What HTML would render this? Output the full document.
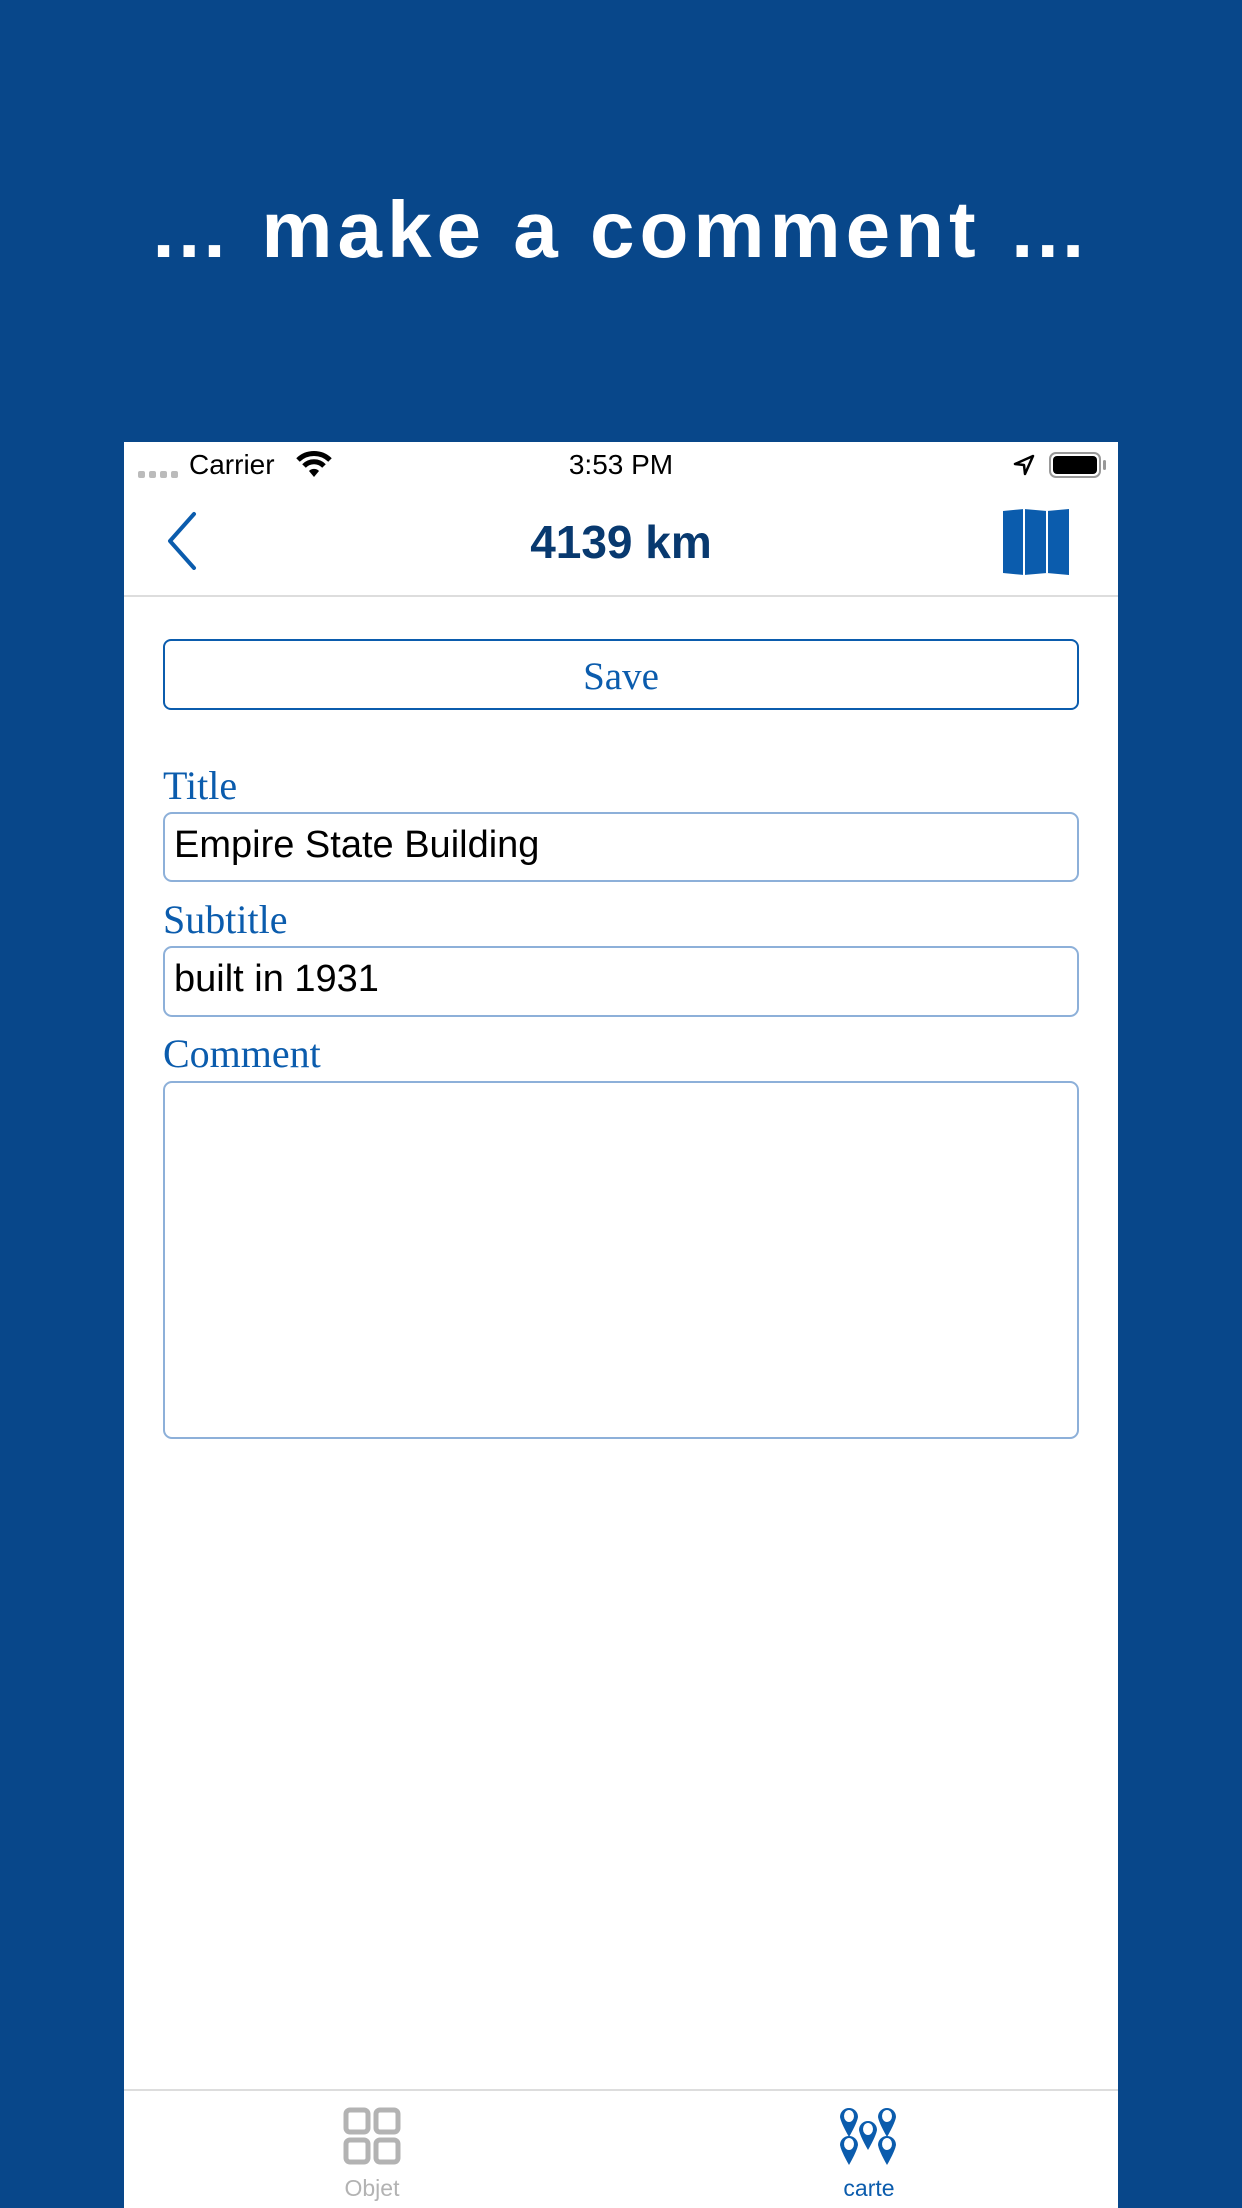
<!DOCTYPE html>
<html><head><meta charset="utf-8"><style>
*{margin:0;padding:0;box-sizing:border-box}
body{width:1242px;height:2208px;background:#08478a;position:relative;overflow:hidden;font-family:"Liberation Sans",sans-serif}
.abs{position:absolute}
.head{left:0;width:1242px;top:190px;text-align:center;color:#fff;font-weight:bold;font-size:80px;letter-spacing:5px;line-height:80px}
.phone{left:124px;top:442px;width:994px;height:1766px;background:#fff}
.lbl{position:absolute;left:39px;font-family:"Liberation Serif",serif;color:#0b5cad;font-size:40px;line-height:40px}
.inp{position:absolute;left:39px;width:916px;border:2.5px solid #8db0d9;border-radius:9px}
.txt{position:absolute;left:50px;font-size:38px;color:#000;line-height:40px}
</style></head><body>
<div class="abs head">… make a comment …</div>
<div class="abs phone">
 <svg class="abs" style="left:14px;top:27px" width="44" height="10"><g fill="#bbb"><rect x="0" y="2" width="7" height="7" rx="2"/><rect x="11" y="2" width="7" height="7" rx="2"/><rect x="22" y="2" width="7" height="7" rx="2"/><rect x="33" y="2" width="7" height="7" rx="2"/></g></svg>
 <div class="abs" style="left:65px;top:7px;font-size:28px;line-height:32px">Carrier</div>
 <svg class="abs" style="left:172px;top:8px" width="36" height="28" viewBox="0 0 36 28"><path d="M2 10 A23 23 0 0 1 34 10" stroke="#000" stroke-width="5" fill="none"/><path d="M8 16 A14 14 0 0 1 28 16" stroke="#000" stroke-width="5" fill="none"/><path d="M13 21 L18 27 L23 21 A7 7 0 0 0 13 21Z" fill="#000"/></svg>
 <div class="abs" style="left:0;width:994px;top:7px;text-align:center;font-size:28px;line-height:32px">3:53 PM</div>
 <svg class="abs" style="left:889px;top:12px" width="22" height="22" viewBox="0 0 22 22"><path d="M20 2 L2 10 L11 11 L12 20 Z" fill="none" stroke="#000" stroke-width="2.5" stroke-linejoin="round"/></svg>
 <div class="abs" style="left:925px;top:10px;width:52px;height:26px;border:2px solid #999;border-radius:7px;padding:2px"><div style="background:#000;width:100%;height:100%;border-radius:4px"></div></div>
 <div class="abs" style="left:979px;top:18px;width:3px;height:10px;background:#999;border-radius:2px"></div>
 <svg class="abs" style="left:40px;top:68px" width="36" height="60" viewBox="0 0 36 60"><path d="M30 4 L6 31 L30 58" fill="none" stroke="#0b5cad" stroke-width="4" stroke-linecap="round" stroke-linejoin="round"/></svg>
 <div class="abs" style="left:0;width:994px;top:74px;text-align:center;font-size:46px;font-weight:bold;color:#08396f;line-height:52px">4139 km</div>
 <svg class="abs" style="left:879px;top:67px" width="66" height="66" viewBox="0 0 66 66"><path d="M0 2 L21 0 L44 2 L66 0 L66 66 L44 64 L21 66 L0 64Z" fill="#0b5cad"/><path d="M21 0V66M44 2V64" stroke="#fff" stroke-width="2"/></svg>
 <div class="abs" style="left:0;top:153px;width:994px;height:2px;background:#ddd"></div>
 <div class="abs" style="left:39px;top:197px;width:916px;height:71px;border:2.5px solid #0b5cad;border-radius:8px;text-align:center;font-family:'Liberation Serif',serif;color:#0b5cad;font-size:39px;line-height:72px">Save</div>
 <div class="lbl" style="top:324px">Title</div>
 <div class="inp" style="top:370px;height:70px"></div>
 <div class="txt" style="top:383px">Empire State Building</div>
 <div class="lbl" style="top:458px">Subtitle</div>
 <div class="inp" style="top:504px;height:71px"></div>
 <div class="txt" style="top:517px">built in 1931</div>
 <div class="lbl" style="top:592px">Comment</div>
 <div class="inp" style="top:639px;height:358px"></div>
 <div class="abs" style="left:0;top:1647px;width:994px;height:2px;background:#ddd"></div>
 <svg class="abs" style="left:219px;top:1665px" width="58" height="58" viewBox="0 0 58 58"><g fill="none" stroke="#b3b3b3" stroke-width="5"><rect x="3" y="3" width="22" height="22" rx="4"/><rect x="33" y="3" width="22" height="22" rx="4"/><rect x="3" y="33" width="22" height="22" rx="4"/><rect x="33" y="33" width="22" height="22" rx="4"/></g></svg>
 <div class="abs" style="left:148px;width:200px;top:1733px;text-align:center;font-size:23px;color:#b3b3b3">Objet</div>
 <svg class="abs" style="left:715px;top:1665px" width="60" height="60" viewBox="0 0 60 60"><defs><g id="p"><path d="M0 10 A9 9 0 1 1 18 10 Q17 16 9 30 Q1 16 0 10Z" fill="#0b5cad"/><ellipse cx="9" cy="9" rx="5" ry="6" fill="#fff"/></g></defs><use href="#p" x="1" y="0"/><use href="#p" x="39" y="0"/><use href="#p" x="20" y="13"/><use href="#p" x="1" y="28"/><use href="#p" x="39" y="28"/></svg>
 <div class="abs" style="left:645px;width:200px;top:1733px;text-align:center;font-size:23px;color:#0b5cad">carte</div>
</div>
</body></html>
